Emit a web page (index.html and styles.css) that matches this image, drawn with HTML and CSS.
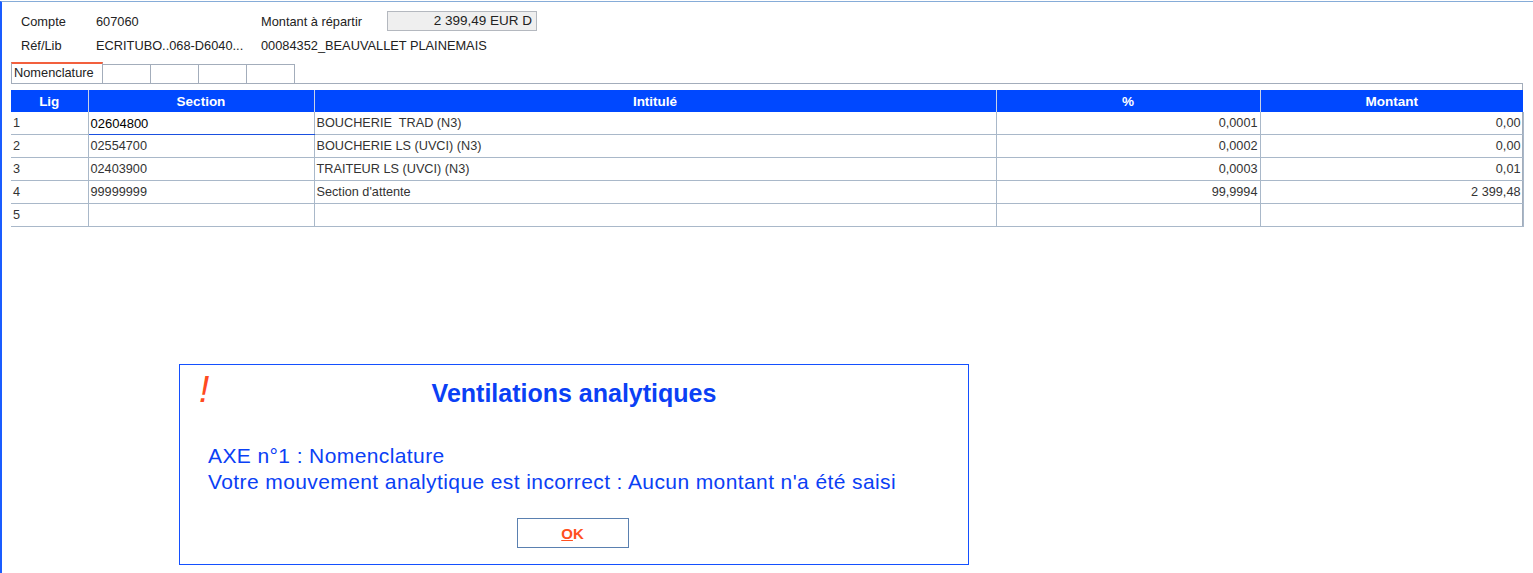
FILE: index.html
```html
<!DOCTYPE html>
<html>
<head>
<title>Ventilations analytiques</title>
<meta charset="utf-8" />
<link rel="stylesheet" href="styles.css">
</head>
<body>

<div class="frame">

<div class="fields">
<div class="field-row">
<span class="label">Compte</span>
<span class="value">607060</span>
<span class="label2">Montant à répartir</span>
<span class="amount">2 399,49 EUR D</span>
</div>
<div class="field-row">
<span class="label">Réf/Lib</span>
<span class="value">ECRITUBO..068-D6040...</span>
<span class="label2">00084352_BEAUVALLET PLAINEMAIS</span>
</div>
</div>

<div class="tabs">
<div class="tab active">Nomenclature</div>
<div class="tab"></div>
<div class="tab"></div>
<div class="tab"></div>
<div class="tab"></div>
</div>

<div class="panel">
<table class="grid">
<colgroup>
<col style="width:77px">
<col style="width:226px">
<col style="width:682px">
<col style="width:264px">
<col style="width:263px">
</colgroup>
<thead>
<tr><th>Lig</th><th>Section</th><th>Intitulé</th><th>%</th><th>Montant</th></tr>
</thead>
<tbody>
<tr><td>1</td><td class="focus">02604800</td><td>BOUCHERIE&nbsp; TRAD (N3)</td><td class="num">0,0001</td><td class="num">0,00</td></tr>
<tr><td>2</td><td>02554700</td><td>BOUCHERIE LS (UVCI) (N3)</td><td class="num">0,0002</td><td class="num">0,00</td></tr>
<tr><td>3</td><td>02403900</td><td>TRAITEUR LS (UVCI) (N3)</td><td class="num">0,0003</td><td class="num">0,01</td></tr>
<tr><td>4</td><td>99999999</td><td>Section d'attente</td><td class="num">99,9994</td><td class="num">2 399,48</td></tr>
<tr><td>5</td><td></td><td></td><td></td><td></td></tr>
</tbody>
</table>
</div>

<div class="dialog">
<span class="bang">!</span>
<div class="dialog-title">Ventilations analytiques</div>
<div class="dialog-msg">
<div>AXE n°1 : Nomenclature</div>
<div>Votre mouvement analytique est incorrect : Aucun montant n'a été saisi</div>
</div>
<div class="dialog-actions">
<button class="ok"><u>O</u>K</button>
</div>
</div>

</div>

</body>
</html>
```

FILE: styles.css
```css
body {
    margin: 0;
    background-color: #fff;
    font-family: "Liberation Sans", Arial, sans-serif;
    font-size: 12.8px;
    color: #222;
}

.frame {
    position: relative;
    height: 571px;
    margin-top: 1px;
    border-top: 1px solid #86acd8;
    border-left: 2px solid #1a5cff;
}

.fields {
    padding-top: 7px;
}

.field-row {
    display: flex;
    align-items: center;
    height: 24px;
    white-space: nowrap;
}

.label {
    width: 75px;
    padding-left: 19px;
}

.value {
    width: 165px;
}

.label2 {
    width: 126px;
}

.amount {
    box-sizing: border-box;
    width: 150px;
    height: 20px;
    line-height: 18px;
    padding-right: 4px;
    text-align: right;
    background-color: #efefef;
    border: 1px solid #b4b8bf;
    font-size: 13.5px;
}

.tabs {
    display: flex;
    align-items: flex-end;
    margin-top: 5px;
    padding-left: 9px;
    height: 21px;
}

.tab {
    box-sizing: border-box;
    width: 48px;
    height: 19px;
    border: 1px solid #a3adbb;
    border-left: none;
    border-bottom: none;
}

.tab.active {
    width: 92px;
    height: 21px;
    border-left: 1px solid #a3adbb;
    border-top: 2px solid #f2603e;
    padding-left: 2px;
    line-height: 17px;
    background-color: #fff;
}

.panel {
    margin-left: 9px;
    width: 1512px;
    border-top: 1px solid #a3adbb;
    border-right: 1px solid #a3adbb;
    padding-top: 6px;
    box-sizing: border-box;
}

.grid {
    border-collapse: collapse;
    table-layout: fixed;
    width: 1512px;
    font-size: 12.7px;
}

.grid th {
    height: 22px;
    padding: 0;
    background-color: #0048ff;
    color: #fff;
    font-size: 13.5px;
    font-weight: bold;
    border-left: 1px solid #c8d2e6;
    text-align: center;
}

.grid th:first-child {
    border-left: none;
}

.grid td {
    height: 22px;
    padding: 0 2px;
    border: 1px solid #a9b8c9;
    border-top: none;
    color: #333;
    white-space: nowrap;
}

.grid td:first-child {
    border-left: none;
}

.grid td.num {
    text-align: right;
}

.grid td.focus {
    color: #000;
    border-left: 1px solid #1a50e0;
    border-bottom: 1px solid #1a50e0;
    font-size: 13px;
}

.dialog {
    position: absolute;
    left: 177px;
    top: 362px;
    width: 788px;
    height: 199px;
    border: 1px solid #1450ff;
    background-color: #fff;
    color: #0a40f5;
}

.bang {
    position: absolute;
    left: 19px;
    top: 4px;
    font-size: 37px;
    font-style: italic;
    color: #ff4a20;
}

.dialog-title {
    margin-top: 14px;
    text-align: center;
    font-size: 25px;
    font-weight: bold;
}

.dialog-msg {
    margin-top: 35px;
    padding-left: 28px;
    font-size: 21px;
    letter-spacing: 0.4px;
    line-height: 26px;
}

.dialog-actions {
    margin-top: 23px;
    text-align: center;
}

.ok {
    width: 112px;
    height: 30px;
    margin-right: 3px;
    background-color: #fff;
    border: 1px solid #5a80b0;
    color: #ff5020;
    font-family: "Liberation Sans", Arial, sans-serif;
    font-size: 15px;
    font-weight: bold;
}
```
